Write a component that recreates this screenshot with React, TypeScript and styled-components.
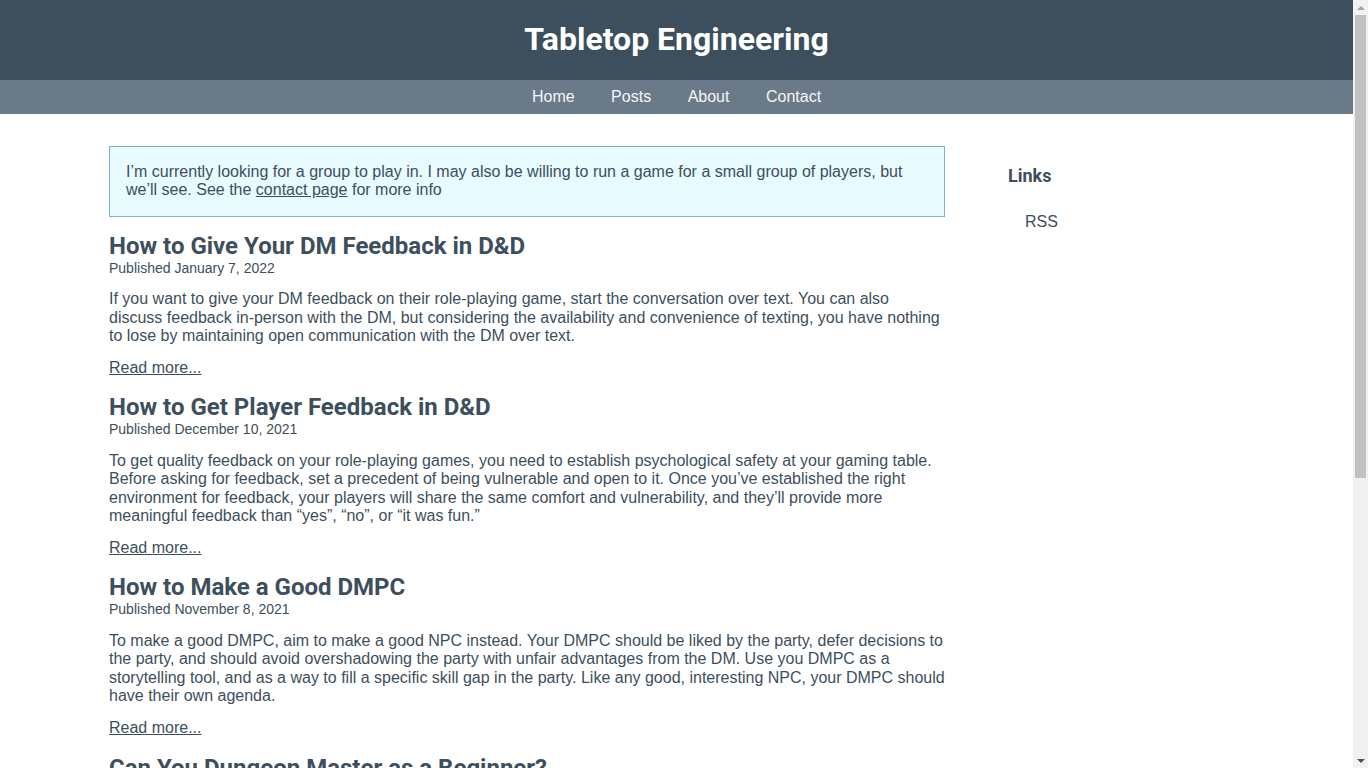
import React from "react";
import styled, { createGlobalStyle } from "styled-components";

const GlobalStyle = createGlobalStyle`
  html { overflow: hidden; }
  body {
    margin: 0 15px 0 0;
    padding: 0;
    background: #ffffff;
    color: #3d4f5d;
    font-family: "Liberation Sans", Arial, sans-serif;
    font-size: 16px;
    line-height: 18.4px;
  }
  * { box-sizing: border-box; }
`;

const Header = styled.header`
  background: #3d4f5d;
  height: 80px;
  display: flex;
  align-items: center;
  justify-content: center;
`;

const SiteTitle = styled.h1`
  margin: 0;
  color: #ffffff;
  font-family: Roboto, "Liberation Sans", sans-serif;
  font-weight: 700;
  font-size: 32px;
  line-height: 38px;
  padding-bottom: 2px;
`;

const Nav = styled.nav`
  background: #6a7a88;
  height: 34px;
  display: flex;
  align-items: center;
  justify-content: center;
  gap: 36.5px;
`;

const NavLink = styled.a`
  color: #f4f6f8;
  text-decoration: none;
  font-size: 16px;
  line-height: 18px;
`;

const Container = styled.div`
  width: 1135px;
  margin: 0 auto;
  padding: 32px 0 40px;
  display: flex;
  gap: 63px;
  align-items: flex-start;
`;

const Main = styled.main`
  width: 836px;
  flex: none;
`;

const Notice = styled.div`
  background: #e8fbff;
  border: 1px solid #7fadd5;
  padding: 16px;
  margin-bottom: 15px;
`;

const TextLink = styled.a`
  color: inherit;
  text-decoration: underline;
`;

const Article = styled.article`
  margin-bottom: 16px;
`;

const PostTitle = styled.h2`
  margin: 0;
  font-family: Roboto, "Liberation Sans", sans-serif;
  font-weight: 700;
  font-size: 24px;
  line-height: 28px;
  color: #3d4f5d;
`;

const PostDate = styled.div`
  font-size: 14px;
  line-height: 16px;
`;

const Summary = styled.p`
  margin: 14.5px 0 13.5px;
`;

const ReadMore = styled.p`
  margin: 0;
`;

const Sidebar = styled.aside`
  width: 236px;
  padding-top: 19px;
`;

const SideTitle = styled.h3`
  margin: 0;
  font-family: Roboto, "Liberation Sans", sans-serif;
  font-weight: 700;
  font-size: 18px;
  line-height: 21px;
`;

const SideList = styled.ul`
  list-style: none;
  margin: 27px 0 0;
  padding-left: 17px;
`;

const SideLink = styled.a`
  color: #3d4f5d;
  text-decoration: none;
`;

/* browser-like vertical scrollbar drawn over the right edge */
const ScrollTrack = styled.div`
  position: fixed;
  top: 0;
  right: 0;
  width: 15px;
  height: 100vh;
  background: #f1f1f1;
  display: flex;
  flex-direction: column;
  align-items: center;
`;

const ScrollArrow = styled.div<{ $down?: boolean }>`
  width: 15px;
  height: 15px;
  flex: none;
  display: flex;
  align-items: center;
  justify-content: center;
  &::before {
    content: "";
    width: 0;
    height: 0;
    border-left: 4px solid transparent;
    border-right: 4px solid transparent;
    ${(p) =>
      p.$down
        ? "border-top: 4px solid #505050;"
        : "border-bottom: 4px solid #a3a3a3;"}
  }
`;

const ScrollBody = styled.div`
  flex: 1;
  width: 100%;
  display: flex;
  justify-content: center;
`;

const ScrollThumb = styled.div`
  width: 11px;
  height: 463px;
  background: #c1c1c1;
`;

const posts = [
  {
    title: "How to Give Your DM Feedback in D&D",
    date: "January 7, 2022",
    summary:
      "If you want to give your DM feedback on their role-playing game, start the conversation over text. You can also discuss feedback in-person with the DM, but considering the availability and convenience of texting, you have nothing to lose by maintaining open communication with the DM over text.",
  },
  {
    title: "How to Get Player Feedback in D&D",
    date: "December 10, 2021",
    summary:
      "To get quality feedback on your role-playing games, you need to establish psychological safety at your gaming table. Before asking for feedback, set a precedent of being vulnerable and open to it. Once you\u2019ve established the right environment for feedback, your players will share the same comfort and vulnerability, and they\u2019ll provide more meaningful feedback than \u201cyes\u201d, \u201cno\u201d, or \u201cit was fun.\u201d",
  },
  {
    title: "How to Make a Good DMPC",
    date: "November 8, 2021",
    summary:
      "To make a good DMPC, aim to make a good NPC instead. Your DMPC should be liked by the party, defer decisions to the party, and should avoid overshadowing the party with unfair advantages from the DM. Use you DMPC as a storytelling tool, and as a way to fill a specific skill gap in the party. Like any good, interesting NPC, your DMPC should have their own agenda.",
  },
  {
    title: "Can You Dungeon Master as a Beginner?",
    date: "October 25, 2021",
    summary:
      "Yes, you can be a Dungeon Master as a beginner. Everyone starts somewhere, and running a game is one of the best ways to learn the rules. Start small, keep your first session short, and lean on your players to help you along the way.",
  },
  {
    title: "How to Prepare Your First D&D Session",
    date: "October 4, 2021",
    summary:
      "Preparing your first session doesn\u2019t have to be overwhelming. Focus on a strong opening scene, a few memorable NPCs, and a clear hook for your players. Everything else you can improvise at the table.",
  },
];

export default function App() {
  return (
    <>
      <GlobalStyle />
      <Header>
        <SiteTitle>Tabletop Engineering</SiteTitle>
      </Header>
      <Nav>
        <NavLink href="#">Home</NavLink>
        <NavLink href="#">Posts</NavLink>
        <NavLink href="#">About</NavLink>
        <NavLink href="#">Contact</NavLink>
      </Nav>
      <Container>
        <Main>
          <Notice>
            I’m currently looking for a group to play in. I may also be willing to run a game for a
            small group of players, but we’ll see. See the{" "}
            <TextLink href="#">contact page</TextLink> for more info
          </Notice>
          {posts.map((p) => (
            <Article key={p.title}>
              <PostTitle>{p.title}</PostTitle>
              <PostDate>Published {p.date}</PostDate>
              <Summary>{p.summary}</Summary>
              <ReadMore>
                <TextLink href="#">Read more...</TextLink>
              </ReadMore>
            </Article>
          ))}
        </Main>
        <Sidebar>
          <SideTitle>Links</SideTitle>
          <SideList>
            <li>
              <SideLink href="#">RSS</SideLink>
            </li>
          </SideList>
        </Sidebar>
      </Container>
      <ScrollTrack aria-hidden="true">
        <ScrollArrow />
        <ScrollBody>
          <ScrollThumb />
        </ScrollBody>
        <ScrollArrow $down />
      </ScrollTrack>
    </>
  );
}
